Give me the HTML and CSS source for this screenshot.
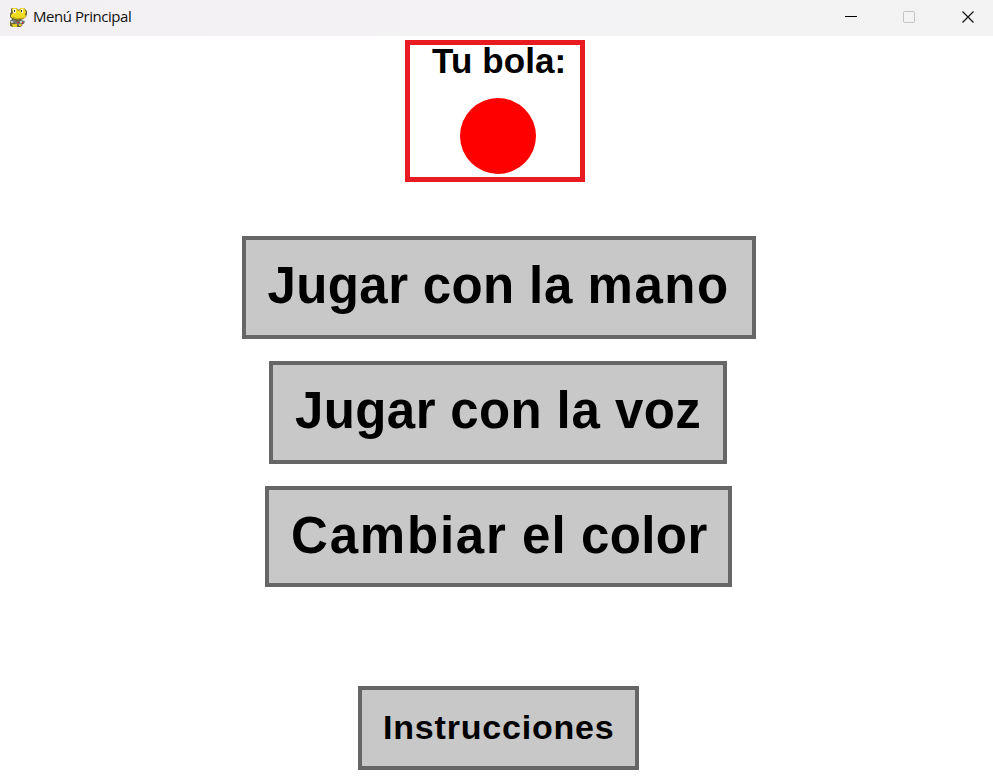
FILE: index.html
```html
<!DOCTYPE html>
<html lang="es">
<head>
<meta charset="utf-8">
<title>Menú Principal</title>
<link rel="stylesheet" href="styles.css">
</head>
<body>
<header class="titlebar">
  <svg class="logo" width="20" height="22" viewBox="0 0 20 22">
    <path d="M4 2h4l3 2 2-2h3l3 3v3l-1 3-3 2-2 1 2 2-1 4-2 1H5l-3-1v-4l2-3-2-2V8l1-2V3z" fill="#6b6634"/>
    <path d="M5 2h3l3 3 2-3h3l2 4-1 2 1 3-4 2H7l-4-2V9l2-2-1-4z" fill="#f4dc20"/>
    <path d="M5 3h3v4H5zM13 3h2v4h-2z" fill="#f4f3d8"/>
    <path d="M6 4h1v2H6zM13 4h1v2h-1z" fill="#333"/>
    <path d="M5 11l4 2 7-1" fill="none" stroke="#b19b17"/>
    <path d="M2 14h5l2 2 4-2 4 1-1 3h-3l-3 1-3-2H3z" fill="#747979"/>
    <path d="M3 15h2v2H3zM12 15h2v2h-2z" fill="#c3cbca"/>
    <path d="M9 16h2v1H9zM14 16h1v2h-1z" fill="#c62b2b"/>
    <path d="M4 18h5v3H5zM11 18h3l-1 2h-2z" fill="#e4c91f"/>
  </svg>
  <span class="title">Menú Principal</span>
  <svg class="controls" width="130" height="14" viewBox="0 0 130 14">
    <path d="M0 6.5h12" stroke="#000"/>
    <rect x="58.5" y="1.5" width="11" height="11" rx="1" fill="none" stroke="#c3c3c3"/>
    <path d="M117.5 1.5l11 11m0-11l-11 11" stroke="#111" stroke-width="1.2"/>
  </svg>
</header>
<main class="menu">
  <section class="ball-panel">
    <h1 class="ball-label">Tu bola:</h1>
    <div class="ball"></div>
  </section>
  <button class="option hand"><span class="jugar">Jugar</span> <span class="con">con</span> <span class="la">la</span> <span class="mano">mano</span></button>
  <button class="option voice"><span class="jugar">Jugar</span> <span class="con">con</span> <span class="la">la</span> <span class="voz">voz</span></button>
  <button class="option color"><span class="cambiar">Cambiar</span> <span class="el">el</span> <span class="word-color">color</span></button>
  <button class="option help">Instrucciones</button>
</main>
</body>
</html>
```
FILE: styles.css
```css
* { box-sizing: border-box; }
body {
  margin: 0;
  width: 993px;
  height: 782px;
  overflow: hidden;
  background: #fff;
  font-family: "Liberation Sans", Arial, sans-serif;
}
.titlebar {
  display: flex;
  align-items: center;
  height: 36px;
  padding: 0 18px 3px 8px;
  background: linear-gradient(90deg, #f3f0f4, #f3f3f3);
}
.title {
  margin: -2px 0 0 5px;
  font: 15px/20px "Open Sans", "Noto Sans", sans-serif;
  letter-spacing: -0.45px;
  color: #111;
}
.controls { margin-left: auto; }
.menu {
  display: flex;
  flex-direction: column;
  align-items: flex-start;
  padding-top: 4px;
}
.ball-panel {
  width: 180px;
  height: 142px;
  margin-left: 405px;
  border: 5px solid #e81b20;
}
.ball-label {
  margin: 0 0 0 22px;
  font-size: 35px;
  line-height: 32px;
  letter-spacing: 0.1px;
  white-space: nowrap;
}
.ball {
  width: 76px;
  height: 76px;
  margin: 21px 0 0 50px;
  border-radius: 50%;
  background: #f00;
}
.option {
  display: block;
  padding: 0 0 0 22px;
  border: 4px solid #666;
  background: #c8c8c8;
  color: #000;
  font: bold 51px/60px "Liberation Sans", Arial, sans-serif;
  letter-spacing: 0.4px;
  word-spacing: -0.2px;
  text-align: left;
  white-space: nowrap;
}
.hand { width: 514px; height: 103px; margin: 54px 0 0 241.5px; padding-bottom: 4px; }
.voice { width: 458px; height: 103px; margin: 22px 0 0 269px; padding-bottom: 4px; }
.color { width: 467px; height: 101px; margin: 22px 0 0 265px; padding-bottom: 2px; }
.help {
  width: 281px;
  height: 84px;
  margin: 99px 0 0 358px;
  padding: 0 0 3px 21px;
  font-size: 34px;
  line-height: 40px;
  letter-spacing: 0.8px;
}
.mano { letter-spacing: 1.5px; }
.la { letter-spacing: 0.8px; }
.cambiar { letter-spacing: 1.8px; }
.el { letter-spacing: 1px; }
```
